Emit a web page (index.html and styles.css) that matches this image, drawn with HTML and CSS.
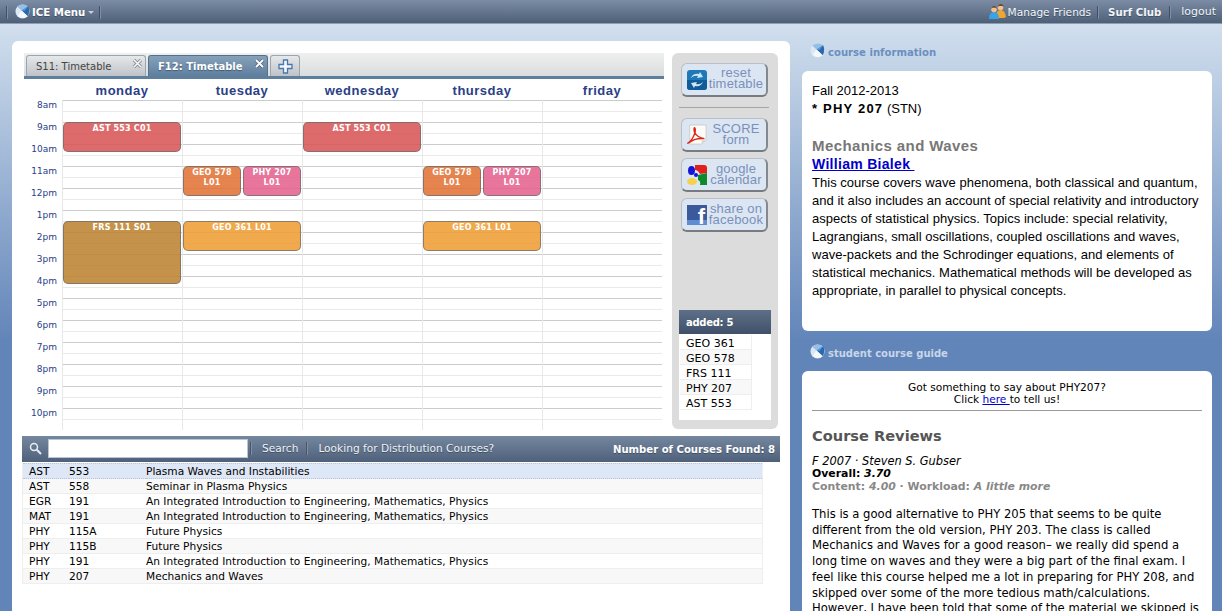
FILE: index.html
```html
<!DOCTYPE html>
<html lang="en">
<head>
  <meta charset="UTF-8" />
  <title>ICE Timetable</title>
  <link rel="stylesheet" href="styles.css">
</head>
<body>
  <svg class="defs" width="0" height="0">
    <defs>
      <symbol id="globe-shape" viewBox="0 0 16 16">
        <circle cx="8" cy="8" r="7.500" fill="#dbe8f3"/>
        <path d="M2.500 3Q8-1.500 14 2.500L7 7z" fill="#93c0e6"/>
        <path d="M14 2.500Q16.500 8 13.500 13L7 7z" fill="#2a68b2"/>
        <path d="M7 7l6.500 6Q8 17 3 12.500z" fill="#f6f9fc"/>
        <path d="M7 7l7-4.500-4 5z" fill="#5f9ad6"/>
      </symbol>
    </defs>
  </svg>

  <header class="topbar">
    <div class="topbar-group">
      <span class="topsep"></span>
      <svg class="globe globe-top" viewBox="0 0 16 16"><use href="#globe-shape"/></svg>
      <b class="menu-title">ICE Menu</b><span class="caret"></span>
      <span class="topsep topsep-menu"></span>
    </div>
    <nav class="topbar-group">
      <svg class="friends" width="17" height="15" viewBox="0 0 17 15">
        <path d="M7 13q0-7 4.500-7t5.500 7l-2 1H8z" fill="#eea62c"/>
        <circle cx="11.500" cy="3.500" r="2.800" fill="#efc295"/><path d="M8.800 3q.5-3 3-3t3 3l-1.300-1h-3.500z" fill="#6b4a2c"/>
        <path d="M0 15q0-7 5-7t5 7z" fill="#3aa2e6"/>
        <circle cx="5" cy="5.500" r="2.800" fill="#efc295"/><path d="M2.300 5q.3-3 2.700-3t2.700 3l-1-1.200H3.300z" fill="#6b4a2c"/>
      </svg>
      <a class="toplink">Manage Friends</a>
      <span class="topsep"></span>
      <a class="toplink toplink-bold">Surf Club</a>
      <span class="topsep"></span>
      <a class="toplink toplink-last">logout</a>
    </nav>
  </header>

  <div class="page">
    <main class="left-panel">
      <div class="calendar-row">
        <section class="timetable">
          <div class="tabs">
            <div class="tab">S11: Timetable
              <svg class="tab-x" width="11" height="11" viewBox="0 0 11 11"><path d="M2 2l7 7M9 2l-7 7" stroke="#8a919a" stroke-width="3.200"/><path d="M2 2l7 7M9 2l-7 7" stroke="#f4f5f6" stroke-width="1.600"/></svg>
            </div>
            <div class="tab tab-active">F12: Timetable
              <svg class="tab-x" width="11" height="11" viewBox="0 0 11 11"><path d="M2 2l7 7M9 2l-7 7" stroke="#4d6580" stroke-width="3.200"/><path d="M2 2l7 7M9 2l-7 7" stroke="#fff" stroke-width="1.800"/></svg>
            </div>
            <div class="tab tab-add">
              <svg width="15" height="15" viewBox="0 0 15 15"><path d="M5.500 1h4v4.500H14v4H9.500V14h-4V9.500H1v-4h4.500z" fill="#f2f6fb" stroke="#4a76ad" stroke-width="1.300"/></svg>
            </div>
          </div>
          <div class="day-heads">
            <div class="day-head">monday</div>
            <div class="day-head">tuesday</div>
            <div class="day-head">wednesday</div>
            <div class="day-head">thursday</div>
            <div class="day-head">friday</div>
          </div>
          <div class="grid">
            <div class="hours">
              <span>8am</span><span>9am</span><span>10am</span><span>11am</span><span>12pm</span>
              <span>1pm</span><span>2pm</span><span>3pm</span><span>4pm</span><span>5pm</span>
              <span>6pm</span><span>7pm</span><span>8pm</span><span>9pm</span><span>10pm</span>
            </div>
            <div class="day">
              <div class="event ev-ast" style="top:22px;height:30px">AST 553 C01</div>
              <div class="event ev-frs" style="top:121px;height:63px">FRS 111 S01</div>
            </div>
            <div class="day">
              <div class="event ev-half ev-geo" style="top:66px;height:30px">GEO 578<br>L01</div>
              <div class="event ev-half ev-half-2 ev-phy" style="top:66px;height:30px">PHY 207<br>L01</div>
              <div class="event ev-361" style="top:121px;height:30px">GEO 361 L01</div>
            </div>
            <div class="day">
              <div class="event ev-ast" style="top:22px;height:30px">AST 553 C01</div>
            </div>
            <div class="day">
              <div class="event ev-half ev-geo" style="top:66px;height:30px">GEO 578<br>L01</div>
              <div class="event ev-half ev-half-2 ev-phy" style="top:66px;height:30px">PHY 207<br>L01</div>
              <div class="event ev-361" style="top:121px;height:30px">GEO 361 L01</div>
            </div>
            <div class="day"></div>
          </div>
        </section>

        <aside class="sidebar">
          <a class="side-btn">
            <svg width="20" height="20" viewBox="0 0 20 20">
              <rect width="20" height="20" rx="3" fill="#1f78b8"/>
              <path d="M0 10h20v7a3 3 0 0 1-3 3H3a3 3 0 0 1-3-3z" fill="#0f5c98"/>
              <path d="M4 8q2-5 8-4l1-2 3 5-6 1 1-2q-4-1-7 2zM16 12q-2 5-8 4l-1 2-3-5 6-1-1 2q4 1 7-2z" fill="#cfe6f6"/>
            </svg>
            <span class="side-text">reset<br>timetable</span>
          </a>
          <hr class="side-rule">
          <a class="side-btn">
            <svg width="20" height="24" viewBox="0 0 22 24">
              <path d="M3 1h18v16l-5 5H3z" fill="#fbfbf8" stroke="#c4c4bc" stroke-width=".8"/>
              <path d="M21 17l-5 1v4z" fill="#d8d8d0"/>
              <path d="M1 21q5-3 8-12 .5-5-.8-5-1 1 0 5 3 6 11 7-6-.5-11 1-3 1.500-7 4z" fill="none" stroke="#e0261c" stroke-width="1.500"/>
            </svg>
            <span class="side-text">SCORE<br>form</span>
          </a>
          <a class="side-btn">
            <svg width="20" height="20" viewBox="0 0 20 20">
              <path d="M8 0h9a3 3 0 0 1 3 3v5l-7 1q-2-4-5-4z" fill="#e0201b"/>
              <path d="M11 10l9-2v12h-7q1-4-2-5z" fill="#0c8a2c"/>
              <ellipse cx="4.500" cy="5.500" rx="3.500" ry="4.500" fill="#1414d8"/>
              <circle cx="9" cy="10" r="2" fill="#1414d8"/>
              <ellipse cx="5" cy="16.500" rx="5" ry="3.500" fill="#f6d24a"/>
            </svg>
            <span class="side-text">google<br>calendar</span>
          </a>
          <a class="side-btn">
            <span class="fb-icon">f</span>
            <span class="side-text">share on<br>facebook</span>
          </a>
          <div class="added">
            <div class="added-head">added: 5</div>
            <ul class="added-list">
              <li>GEO 361</li>
              <li>GEO 578</li>
              <li>FRS 111</li>
              <li>PHY 207</li>
              <li>AST 553</li>
            </ul>
          </div>
        </aside>
      </div>

      <div class="searchbar">
        <svg class="search-icon" width="13" height="13" viewBox="0 0 13 13">
          <circle cx="5" cy="5" r="3.500" fill="none" stroke="#e6edf4" stroke-width="1.500"/>
          <path d="M7.800 7.800L12 12" stroke="#e6edf4" stroke-width="2"/>
        </svg>
        <input class="search-input" type="text">
        <span class="search-sep"></span>
        <a class="search-link">Search</a>
        <span class="search-sep search-sep-2"></span>
        <a class="search-link">Looking for Distribution Courses?</a>
        <b class="search-count">Number of Courses Found: 8</b>
      </div>

      <table class="results">
        <tr class="row-selected"><td class="c-dept">AST</td><td class="c-num">553</td><td>Plasma Waves and Instabilities</td></tr>
        <tr><td class="c-dept">AST</td><td class="c-num">558</td><td>Seminar in Plasma Physics</td></tr>
        <tr><td class="c-dept">EGR</td><td class="c-num">191</td><td>An Integrated Introduction to Engineering, Mathematics, Physics</td></tr>
        <tr><td class="c-dept">MAT</td><td class="c-num">191</td><td>An Integrated Introduction to Engineering, Mathematics, Physics</td></tr>
        <tr><td class="c-dept">PHY</td><td class="c-num">115A</td><td>Future Physics</td></tr>
        <tr><td class="c-dept">PHY</td><td class="c-num">115B</td><td>Future Physics</td></tr>
        <tr><td class="c-dept">PHY</td><td class="c-num">191</td><td>An Integrated Introduction to Engineering, Mathematics, Physics</td></tr>
        <tr><td class="c-dept">PHY</td><td class="c-num">207</td><td>Mechanics and Waves</td></tr>
      </table>
    </main>

    <div class="right-col">
      <h3 class="panel-title">
        <svg class="globe" viewBox="0 0 16 16"><use href="#globe-shape"/></svg>course information
      </h3>
      <section class="card card-info">
        <div>Fall 2012-2013</div>
        <div><b class="course-code">* PHY 207</b> (STN)</div>
        <h2 class="course-name">Mechanics and Waves</h2>
        <a class="prof" href="#">William Bialek&nbsp;</a>
        <p class="course-desc">This course covers wave phenomena, both classical and quantum, and it also includes an account of special relativity and introductory aspects of statistical physics. Topics include: special relativity, Lagrangians, small oscillations, coupled oscillations and waves, wave-packets and the Schrodinger equations, and elements of statistical mechanics. Mathematical methods will be developed as appropriate, in parallel to physical concepts.</p>
      </section>

      <h3 class="panel-title panel-title-light">
        <svg class="globe" viewBox="0 0 16 16"><use href="#globe-shape"/></svg>student course guide
      </h3>
      <section class="card card-guide">
        <div class="guide-cta">Got something to say about PHY207?<br>Click <a href="#">here </a>to tell us!</div>
        <hr class="guide-rule">
        <h2 class="reviews-title">Course Reviews</h2>
        <div class="review-meta">
          <div class="review-head"><i>F 2007 &middot; Steven S. Gubser</i></div>
          <div><b>Overall: <i>3.70</i></b></div>
          <div class="review-sub"><b>Content: <i>4.00</i> &middot; Workload: <i>A little more</i></b></div>
        </div>
        <p class="review-body">This is a good alternative to PHY 205 that seems to be quite different from the old version, PHY 203. The class is called Mechanics and Waves for a good reason&ndash; we really did spend a long time on waves and they were a big part of the final exam. I feel like this course helped me a lot in preparing for PHY 208, and skipped over some of the more tedious math/calculations. However, I have been told that some of the material we skipped is</p>
      </section>
    </div>
  </div>
</body>
</html>
```

FILE: styles.css
```css
html, body {
  height: 611px;
  overflow: hidden;
}

body {
  margin: 0;
  font-family: "DejaVu Sans", sans-serif;
  font-size: 10.6px;
  color: #000;
  background: linear-gradient(#d1dfee 24px, #6285b9 340px) no-repeat;
  background-color: #6285b9;
}

.defs {
  position: absolute;
}

/* top bar */
.topbar {
  height: 24px;
  display: flex;
  justify-content: space-between;
  align-items: center;
  padding-top: 1px;
  background: linear-gradient(#7b8ca4, #4e6078);
  border-bottom: 1px solid #8e9db1;
  box-sizing: border-box;
  color: #fff;
}

.topbar-group {
  display: flex;
  align-items: center;
  height: 100%;
}

.topsep {
  width: 1px;
  height: 13px;
  background: #3f4f64;
  border-right: 1px solid #7f8fa5;
  margin-left: 6px;
}

.globe-top {
  margin: -1px 2px 0 7px;
}

.globe {
  width: 15px;
  height: 15px;
  flex: none;
}

.menu-title {
  font-size: 10.2px;
  font-weight: bold;
  text-shadow: 0 1px 0 #3f4f64;
}

.caret {
  border: 3px solid transparent;
  border-top-color: #c5d0dc;
  margin: 3px 0 0 3px;
}

.topsep-menu {
  margin-left: 5px;
}

.friends {
  margin: -2px 2px 0 0;
}

.toplink {
  color: #f2f5f8;
  text-shadow: 0 1px 0 #3f4f64;
}

.toplink-bold {
  font-size: 10.2px;
  font-weight: bold;
  margin: 0 2px 0 9px;
}

.toplink-last {
  font-size: 11px;
  margin: -2px 6px 0 10px;
}

/* page layout */
.page {
  display: flex;
  align-items: flex-start;
  gap: 12px;
  padding: 17px 10px 0 12px;
}

.left-panel {
  width: 778px;
  height: 570px;
  box-sizing: border-box;
  background: #fff;
  border-radius: 6px 6px 0 0;
  padding: 12px;
}

.calendar-row {
  display: flex;
  gap: 8px;
}

/* timetable */
.timetable {
  width: 640px;
}

.tabs {
  height: 26px;
  box-sizing: border-box;
  display: flex;
  align-items: flex-end;
  gap: 2px;
  padding-left: 2px;
  background: linear-gradient(#eef0ef, #dadddd);
  border-bottom: 3px solid #5f7f9f;
}

.tab {
  position: relative;
  width: 120px;
  height: 21px;
  box-sizing: border-box;
  padding: 5px 0 0 9px;
  font-size: 10px;
  color: #444;
  background: linear-gradient(#e6e8e9, #bfc3c8);
  border: 1px solid #9aa5b2;
  border-bottom: 0;
  border-radius: 3px 3px 0 0;
}

.tab-active {
  font-weight: bold;
  color: #fff;
  background: linear-gradient(#86a1ba, #5f7f9e);
  border-color: #54708c;
  text-shadow: 0 1px 1px #3f5a75;
}

.tab-x {
  position: absolute;
  top: 2px;
  right: 2px;
}

.tab-add {
  width: 30px;
  padding: 3px 0 0 7px;
}

.day-heads {
  display: flex;
  padding-left: 38px;
  height: 21px;
}

.day-head {
  width: 120px;
  text-align: center;
  padding-top: 4px;
  font: bold 13px "Liberation Sans", sans-serif;
  line-height: 15px;
  letter-spacing: 0.5px;
  color: #2a4086;
  box-sizing: border-box;
}

.grid {
  display: flex;
  height: 330px;
}

.hours {
  width: 33px;
  padding-right: 5px;
  display: flex;
  flex-direction: column;
  align-items: flex-end;
  font-size: 9px;
  color: #2a4086;
}

.hours span {
  height: 22px;
  line-height: 10px;
}

.day {
  position: relative;
  width: 120px;
  box-sizing: border-box;
  border-left: 1px solid #e8e8e8;
  background-image: repeating-linear-gradient(#ccc 0, #ccc 1px, #fff 1px, #fff 11px, #e9e9e9 11px, #e9e9e9 12px, #fff 12px, #fff 22px);
}

.event {
  position: absolute;
  left: 0;
  width: 118px;
  box-sizing: border-box;
  border: 1px solid rgba(110, 110, 110, 0.75);
  border-radius: 5px;
  padding-top: 1px;
  text-align: center;
  font-size: 8px;
  font-weight: bold;
  line-height: 9.500px;
  letter-spacing: 0.2px;
  color: #fff;
}

.ev-half {
  width: 58px;
}

.ev-half-2 {
  left: 60px;
}

.ev-ast { background: rgba(216, 81, 81, 0.85); }
.ev-frs { background: rgba(186, 127, 42, 0.85); }
.ev-geo { background: rgba(225, 111, 47, 0.85); }
.ev-phy { background: rgba(228, 93, 139, 0.85); }
.ev-361 { background: rgba(238, 154, 47, 0.85); }

/* grey buttons column */
.sidebar {
  width: 106px;
  height: 376px;
  box-sizing: border-box;
  background: #dcdcdc;
  border-radius: 6px;
  padding: 10px 9px 9px;
  display: flex;
  flex-direction: column;
}

.side-btn {
  width: 87px;
  height: 34px;
  flex: none;
  box-sizing: border-box;
  display: flex;
  align-items: center;
  gap: 1px;
  padding: 0 2px 0 5px;
  margin-bottom: 6px;
  background: #dce6f2;
  border: 1px solid #b7c0ca;
  border-right: 2px solid #84898f;
  border-bottom: 2px solid #777c82;
  border-radius: 6px;
}

.side-text {
  flex: 1;
  margin-top: -3px;
  text-align: center;
  font: 13px "Liberation Sans", sans-serif;
  line-height: 11px;
  letter-spacing: 0.2px;
  color: #7a90bb;
}

.side-rule ~ .side-btn .side-text {
  margin-top: -1px;
}

.side-rule {
  width: 90px;
  height: 1px;
  margin: 4px 0 10px -2px;
  border: 0;
  background: #a5a5a5;
}

.fb-icon {
  width: 20px;
  height: 20px;
  flex: none;
  box-sizing: border-box;
  padding-right: 2px;
  text-align: right;
  overflow: hidden;
  font: bold 22px/24px "Liberation Sans", sans-serif;
  color: #fff;
  background: linear-gradient(#3b5a9c 75%, #5f8ed0 75%);
}

.added {
  margin: auto -2px 0;
  height: 110px;
  background: #fff;
}

.added-head {
  height: 24px;
  box-sizing: border-box;
  padding: 7px 0 0 7px;
  font-size: 10px;
  letter-spacing: -0.3px;
  font-weight: bold;
  color: #fff;
  background: linear-gradient(#5e7087, #3f5068);
}

.added-list {
  list-style: none;
  margin: 1px 0 0 1px;
  padding: 0;
  width: 72px;
  font-size: 11px;
}

.added-list li {
  height: 15px;
  line-height: 17px;
  padding-left: 6px;
  box-sizing: border-box;
  border-bottom: 1px solid #eee;
  border-right: 1px solid #eee;
}

.added-list li:nth-child(even) {
  background: #f8f8f8;
}

/* search bar and results */
.searchbar {
  display: flex;
  align-items: center;
  height: 26px;
  box-sizing: border-box;
  margin: 6px -2px 0 -2px;
  padding: 0 5px 1px 0;
  color: #eef2f6;
  background: linear-gradient(#75879f, #4f617a);
}

.search-icon {
  margin-left: 7px;
}

.search-input {
  width: 200px;
  height: 19px;
  box-sizing: border-box;
  margin: 0 0 0 6px;
  padding: 0;
  border: 1px solid #b8c6d4;
  background: #fff;
}

.search-sep {
  width: 1px;
  height: 13px;
  margin: 0 10px 0 2px;
  background: #44566e;
  border-right: 1px solid #80909f;
}

.search-sep-2 {
  margin-left: 8px;
}

.search-link {
  margin-top: -2px;
  text-shadow: 0 1px 0 #3f4f64;
}

.search-count {
  margin: 1px 0 0 auto;
  font-size: 10.1px;
  color: #fff;
  text-shadow: 0 1px 0 #3f4f64;
}

.results {
  width: 741px;
  margin: 1px 0 0 -2px;
  border-spacing: 0;
  border-right: 1px solid #eee;
  border-left: 1px solid #eee;
}

.results td {
  height: 15px;
  box-sizing: border-box;
  padding: 0;
  line-height: 14px;
  border-bottom: 1px solid #eee;
}

.results tr:nth-child(even) {
  background: #f8f8f8;
}

.results tr.row-selected {
  background: #dee7f5;
}

.results tr.row-selected td {
  border-top: 1px dotted #b9c3d4;
  border-bottom: 1px dotted #b9c3d4;
}

.results .c-dept {
  width: 46px;
  padding-left: 6px;
}

.results .c-num {
  width: 77px;
}

/* right column */
.right-col {
  width: 410px;
}

.panel-title {
  display: flex;
  align-items: center;
  gap: 3px;
  height: 22px;
  margin: 0 0 8px 8px;
  padding-top: 1px;
  box-sizing: border-box;
  font-size: 10.1px;
  font-weight: bold;
  color: #6a8fc0;
}

.panel-title .globe {
  margin-top: -4px;
}

.panel-title-light {
  color: #c8d6e8;
  font-size: 10px;
  margin: 11px 0 7px 8px;
}

.card {
  background: #fff;
  border-radius: 6px;
  padding: 10px;
  box-sizing: border-box;
}

.card-info {
  height: 260px;
  padding-top: 11px;
  font: 13px/18px "Liberation Sans", sans-serif;
}

.course-code {
  letter-spacing: 1.2px;
}

.course-name {
  margin: 19px 0 0;
  font-size: 15px;
  line-height: 18px;
  color: #777;
  letter-spacing: 0.4px;
}

.prof {
  font-weight: bold;
  color: #0000cc;
  font-size: 14px;
  letter-spacing: 0.3px;
}

.course-desc {
  margin: 0;
  letter-spacing: 0.03px;
}

.card-guide {
  height: 240px;
  border-radius: 6px 6px 0 0;
  font-size: 11.6px;
  line-height: 13px;
}

.guide-cta {
  text-align: center;
  font-size: 10.6px;
  line-height: 12px;
}

.guide-cta a {
  color: #0000cc;
}

.guide-rule {
  margin: 5px 0 0;
  height: 1px;
  border: 0;
  background: #999;
}

.reviews-title {
  margin: 16px 0 0;
  font-size: 14.6px;
  line-height: 18px;
  color: #555;
}

.review-meta {
  margin-top: 10px;
  font-size: 10.9px;
}

.review-head {
  margin-bottom: -1px;
  font-size: 11.4px;
}

.review-sub {
  color: #888;
}

.review-body {
  margin: 14px 0 0;
  line-height: 15.700px;
}
```
